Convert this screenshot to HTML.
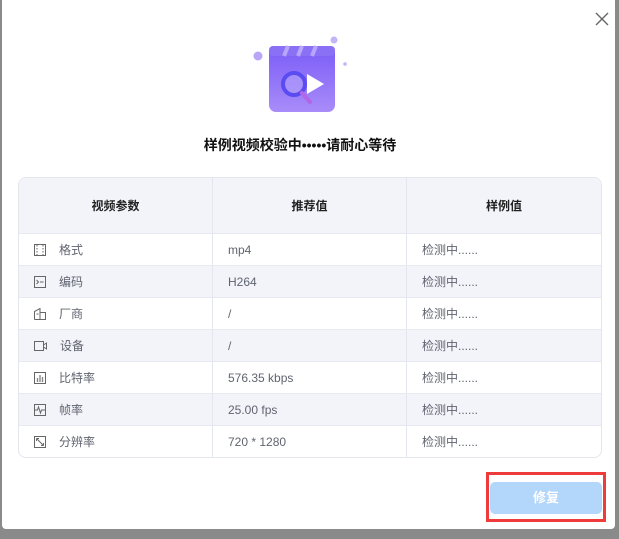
<!DOCTYPE html>
<html><head><meta charset="utf-8"><style>
body{margin:0;width:619px;height:539px;background:#8a8a8a;position:relative;overflow:hidden;font-family:"Liberation Sans","Noto Sans CJK SC",sans-serif}
.dlg{position:absolute;left:2px;top:0;width:613px;height:529px;background:#fff;border-radius:0 0 4px 4px}
.close{position:absolute;left:595px;top:12px}
.title{position:absolute;left:0;width:600px;top:135px;text-align:center;font-size:14px;font-weight:bold;color:#111}
.tb{position:absolute;left:18px;top:177px;width:582px;height:279px;border:1px solid #e4e6ee;border-radius:8px;overflow:hidden;font-size:12px;color:#606470}
.r{position:relative;height:32px;box-sizing:border-box;border-top:1px solid #e8e9f0;display:flex}
.r:nth-child(odd){background:#f3f4f9}
.r.h{height:55px;border-top:none;background:#f3f4f9;font-weight:bold;color:#222}
.c{box-sizing:border-box;display:flex;align-items:center;padding-left:15px}
.c1{width:194px;border-right:1px solid #e4e6ee}
.c2{width:194px;border-right:1px solid #e4e6ee}
.c3{flex:1}
.h .c{justify-content:center;padding-left:0}
.c svg{margin-right:13px;flex:none}
.btn{position:absolute;left:490px;top:482px;width:112px;height:32px;background:#b3d6fb;border-radius:5px;color:#fff;font-size:13px;font-weight:bold;text-align:center;line-height:32px}
.red{position:absolute;left:486px;top:472px;width:114px;height:44px;border:3px solid #ee3b3b}
</style></head><body>
<div class="dlg"></div>
<svg class="close" width="14" height="14"><path d="M1 1L13 13M13 1L1 13" stroke="#666" stroke-width="1.4"/></svg>
<svg style="position:absolute;left:250px;top:30px" width="100" height="90">
<defs><linearGradient id="g" x1="0" y1="0" x2="0" y2="1"><stop offset="0" stop-color="#7a5cf7"/><stop offset="1" stop-color="#a98cf9"/></linearGradient></defs>
<circle cx="8" cy="26" r="4.5" fill="#b9a6f8"/><circle cx="84" cy="10" r="3.5" fill="#c4b4f8"/><circle cx="95" cy="34" r="1.8" fill="#c4b4f8"/>
<rect x="19" y="16" width="66" height="66" rx="7" fill="url(#g)"/>
<rect x="19" y="16" width="66" height="10" rx="4" fill="#8a70f5"/>
<path d="M38 16l-4 10M52 16l-4 10M66 16l-4 10" stroke="#b8a6fb" stroke-width="4"/>
<path d="M57 44l17 10-17 10z" fill="#fff"/>
<circle cx="44" cy="54" r="11" fill="#b6a4fa" fill-opacity=".6" stroke="#5a4cf0" stroke-width="4"/>
<path d="M52 63l8 9" stroke="#b167e8" stroke-width="4" stroke-linecap="round"/>
</svg>
<div class="title">样例视频校验中•••••请耐心等待</div>
<div class="tb">
<div class="r h"><div class="c c1">视频参数</div><div class="c c2">推荐值</div><div class="c c3">样例值</div></div>
<div class="r"><div class="c c1"><svg width="12" height="12"><rect x=".5" y=".5" width="11" height="11" fill="none" stroke="#666"/><path d="M3 1v10M9 1v10" stroke="#666" stroke-dasharray="1.5 1.5"/></svg>格式</div><div class="c c2">mp4</div><div class="c c3">检测中......</div></div>
<div class="r"><div class="c c1"><svg width="12" height="12"><rect x=".5" y=".5" width="11" height="11" fill="none" stroke="#666"/><path d="M2.5 4l2 2-2 2M6 6h3.5" stroke="#666" fill="none"/></svg>编码</div><div class="c c2">H264</div><div class="c c3">检测中......</div></div>
<div class="r"><div class="c c1"><svg width="12" height="12"><path d="M.5 11.5V3.5L6 .5v11M6 4.5h5.5v7H.5M2.5 6h2" stroke="#666" fill="none"/></svg>厂商</div><div class="c c2">/</div><div class="c c3">检测中......</div></div>
<div class="r"><div class="c c1"><svg width="13" height="12"><rect x=".5" y="1.5" width="9" height="9" fill="none" stroke="#666"/><path d="M9.5 5l3-2v6l-3-2" stroke="#666" fill="none"/></svg>设备</div><div class="c c2">/</div><div class="c c3">检测中......</div></div>
<div class="r"><div class="c c1"><svg width="12" height="12"><rect x=".5" y=".5" width="11" height="11" fill="none" stroke="#666"/><path d="M3.5 10V6M6 10V3M8.5 10V5" stroke="#888" stroke-width="1.4"/></svg>比特率</div><div class="c c2">576.35 kbps</div><div class="c c3">检测中......</div></div>
<div class="r"><div class="c c1"><svg width="12" height="12"><rect x=".5" y=".5" width="11" height="11" fill="none" stroke="#666"/><path d="M1 6h2.5l1-3 2 6 1-3H11" stroke="#666" fill="none"/></svg>帧率</div><div class="c c2">25.00 fps</div><div class="c c3">检测中......</div></div>
<div class="r"><div class="c c1"><svg width="12" height="12"><rect x=".5" y=".5" width="11" height="11" fill="none" stroke="#666"/><path d="M2.5 2.5l7 7M2.5 2.5h2.5M2.5 2.5v2.5M9.5 9.5h-2.5M9.5 9.5v-2.5" stroke="#666" fill="none"/></svg>分辨率</div><div class="c c2">720 * 1280</div><div class="c c3">检测中......</div></div>
</div>
<div class="btn">修复</div>
<div class="red"></div>
</body></html>
